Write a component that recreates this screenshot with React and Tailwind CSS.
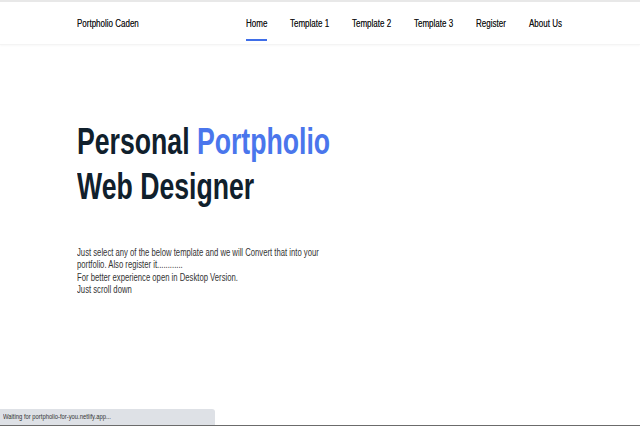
import React from "react";

const font = { fontFamily: '"Liberation Sans", Arial, sans-serif' };

function Sq({ w, sx, children }) {
  return (
    <span className={`inline-block whitespace-nowrap ${w}`}>
      <span className={`inline-block origin-left ${sx}`}>{children}</span>
    </span>
  );
}

export default function App() {
  const nav = [
    ["Home", "w-[21px]"],
    ["Template 1", "w-[39px]"],
    ["Template 2", "w-[39px]"],
    ["Template 3", "w-[39px]"],
    ["Register", "w-[30px]"],
    ["About Us", "w-[34px]"],
  ];
  return (
    <div className="relative w-[640px] h-[426px] bg-white overflow-hidden" style={font}>
      <div className="h-[2px] bg-[#e8e8e8]" />
      <header className="h-[43px] flex items-center justify-between pl-[77px] pr-[77px] shadow-[0_1px_2px_rgba(0,0,0,0.03)] border-b border-[#f4f4f4]">
        <div className="text-[10px] text-[#111] [text-shadow:0_0_0.3px_rgba(0,0,0,0.5)]">
          <Sq w="w-[64px]" sx="scale-x-[0.8]">Portpholio Caden</Sq>
        </div>
        <nav className="flex items-center gap-[23px] h-full">
          {nav.map(([n, w], i) => (
            <div key={n} className="relative h-full flex items-center text-[10px] text-[#111] [text-shadow:0_0_0.3px_rgba(0,0,0,0.5)]">
              <Sq w={w} sx="scale-x-[0.8]">{n}</Sq>
              {i === 0 && <div className="absolute left-0 right-0 bottom-[3px] h-[2px] bg-[#3f6ee8]" />}
            </div>
          ))}
        </nav>
      </header>
      <main className="pl-[77px] pt-[74px]">
        <h1 className="text-[36px] leading-[45px] font-bold text-[#10202c]">
          <Sq w="w-[260px]" sx="scale-x-[0.74]">
            Personal <span className="text-[#4a76ec]">Portpholio</span>
          </Sq>
          <br />
          <Sq w="w-[180px]" sx="scale-x-[0.74]">Web Designer</Sq>
        </h1>
        <div className="mt-[38px] text-[10px] leading-[12.3px] text-[#333]">
          <div><Sq w="w-[240px]" sx="scale-x-[0.77]">Just select any of the below template and we will Convert that into your</Sq></div>
          <div><Sq w="w-[100px]" sx="scale-x-[0.77]">portfolio. Also register it............</Sq></div>
          <div><Sq w="w-[160px]" sx="scale-x-[0.77]">For better experience open in Desktop Version.</Sq></div>
          <div><Sq w="w-[60px]" sx="scale-x-[0.77]">Just scroll down</Sq></div>
        </div>
      </main>
      <div className="absolute left-0 bottom-0 w-full h-[1px] bg-[#6b6b6b]" />
      <div className="absolute left-0 bottom-[1px] w-[215px] h-[16px] bg-[#dee1e6] rounded-tr-[3px] flex items-center pl-[3px] text-[8px] text-[#333]">
        <Sq w="w-[110px]" sx="scale-x-[0.73]">Waiting for portpholio-for-you.netlify.app...</Sq>
      </div>
    </div>
  );
}
